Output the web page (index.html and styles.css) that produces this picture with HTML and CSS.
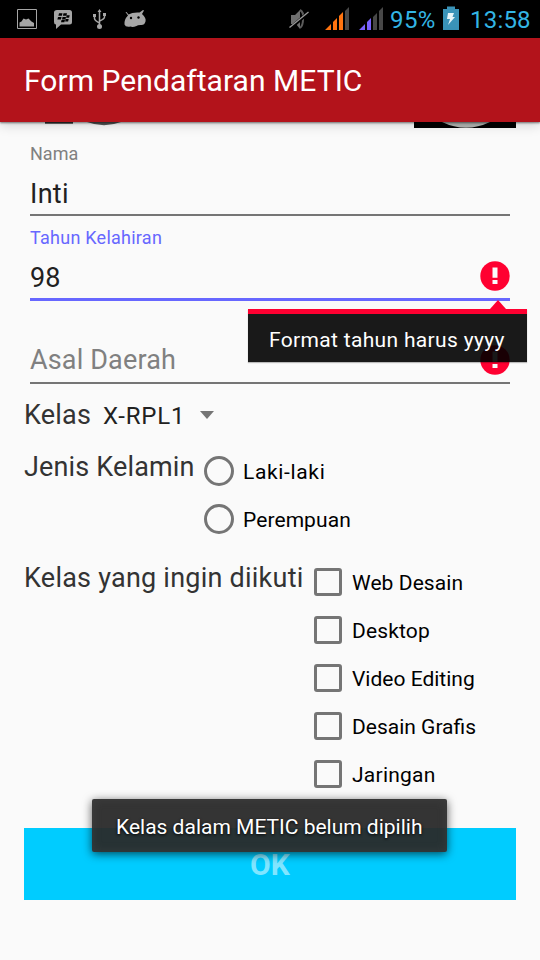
FILE: index.html
```html
<!DOCTYPE html>
<html lang="id">
<head>
<meta charset="utf-8">
<title>Form Pendaftaran METIC</title>
<link rel="stylesheet" href="styles.css">
</head>
<body>
<header class="status">
  <svg width="160" height="38" viewBox="0 0 160 38" fill="#a6a6a6">
    <path d="M17.5 9.500h19v19h-19z" fill="none" stroke="#a6a6a6"/>
    <path d="M19.500 26.500v-4l2-1 2-3 2.500 1 2.500-1 3 3 2.500 1.500v3.500z"/>
    <path d="M57 10h12.500q2.500 0 2.500 2.500v9.500q0 2.500-2.500 2.500h-8.500l-5 4.500v-4.500q-2 0-2-2.500v-9.500q0-2.500 3-2.500z"/>
    <g fill="#000"><path d="M59 13.300h3.500l-.6 2.500h-3.500zM63.500 13.300h3.500l-.6 2.500h-3.500zM58 17h3.500l-.6 2.500H57.400zM62.500 17h3.500l-.6 2.500H62zM66.700 15.200h3l-.6 2.500h-3zM61.500 20h3.500l-.6 2.300H61zM65.700 18.900h3l-.6 2.500h-3z"/></g>
    <g fill="none" stroke="#a6a6a6" stroke-width="1.500"><path d="M99.500 11v15M94.500 16v2.500q0 2 5 4.500M104.500 15v2q0 2-5 4"/></g>
    <path d="M99.500 9l2 3h-4zM93 14h3v3h-3zM103 13h3v3h-3z"/><circle cx="99.500" cy="26.500" r="2.500"/>
    <path d="M125.500 12l1 0 2 2.500q4-2.500 11-2l3.500-2.500 1 .5-2 3.500q4.500 4 3.500 7.500-1 4-5 3.500-3 0-4 1-4 1.500-6 .5-5 1-6-2-.5-5 3.500-9z"/>
    <circle cx="131" cy="18" r="1.200" fill="#000"/><circle cx="138.500" cy="17.500" r="1.200" fill="#000"/>
  </svg>
  <svg class="signals" width="110" height="38" viewBox="280 0 110 38">
    <path d="M291 15h4l5-5v19l-4-5h-5z" fill="#6f6f6f"/>
    <path d="M300 10q4 2 3 9 0 7-3 9" fill="none" stroke="#5c5c5c" stroke-width="2"/>
    <path d="M290 28.500L308.500 12.500" stroke="#000" stroke-width="3.500"/><path d="M289.500 27.500L308.500 12" stroke="#9a9a9a" stroke-width="1.300"/>
    <path d="M325 30l6-6v6zM333 22l4-4v12h-4zM339 16l4-4v18h-4z" fill="#ff7410"/>
    <path d="M345 11l4-4v23h-4zM373 17l4-4v17h-4zM379 11l4-4v23h-4z" fill="#484848"/>
    <path d="M359 30l6-6v6zM367 22l4-4v12h-4z" fill="#7961ff"/>
  </svg>
  <span class="percent">95%</span>
  <svg class="battery" width="16" height="38" viewBox="443 0 16 38">
    <path d="M443 9h4V6.500h8V9h4v21h-16z" fill="#3a93b8"/><path d="M448 13h6l-1.500 4h2.500l-7 8 2-6h-3z" fill="#e6f4f8"/>
  </svg>
  <span class="clock">13:58</span>
</header>
<h1 class="appbar"><span>Form Pendaftaran METIC</span></h1>
<main>
  <div class="banner">
    <svg width="100" height="6" viewBox="40 0 100 6"><path d="M45 0h28v1.700H45z" fill="#333"/><path d="M87 0q17 6.500 34 0z" fill="#555"/></svg>
    <svg width="102" height="6" viewBox="0 0 102 6"><path d="M0 0h102v6H0z"/><path d="M28 0q24 11.500 48 0z" fill="#b5b7b3"/></svg>
  </div>
  <form class="form">
    <div class="field">
      <label class="caption nama">Nama</label>
      <div class="value"><span class="t-inti">Inti</span></div>
    </div>
    <div class="field focused">
      <label class="caption tahun">Tahun Kelahiran</label>
      <div class="value"><span class="t-98">98</span>
        <svg class="error" width="30" height="30" viewBox="0 0 30 30"><circle cx="15" cy="15" r="14.700" fill="#ff0031"/><path d="M12.500 6.500h5v10.300h-5zM12.500 19h5v4h-5z" fill="#fafafa"/></svg>
      </div>
      <div class="popup"><span>Format tahun harus yyyy</span></div>
    </div>
    <div class="field empty">
      <div class="value"><span class="t-asal">Asal Daerah</span>
        <svg class="error" width="30" height="30" viewBox="0 0 30 30"><circle cx="15" cy="15" r="14.700" fill="#ff0031"/><path d="M12.500 6.500h5v10.300h-5zM12.500 19h5v4h-5z" fill="#fafafa"/></svg>
      </div>
    </div>
    <div class="kelas"><span class="big t-kelas">Kelas</span><span class="spinner">X-RPL1</span><i class="caret"></i></div>
    <div class="group gender">
      <span class="big t-jenis">Jenis Kelamin</span>
      <div>
        <div class="option"><i class="radio"></i><span class="o1">Laki-laki</span></div>
        <div class="option"><i class="radio"></i><span class="o2">Perempuan</span></div>
      </div>
    </div>
    <div class="group classes">
      <span class="big t-ikut">Kelas yang ingin diikuti</span>
      <div>
        <div class="option"><i class="check"></i><span class="o3">Web Desain</span></div>
        <div class="option"><i class="check"></i><span class="o4">Desktop</span></div>
        <div class="option"><i class="check"></i><span class="o5">Video Editing</span></div>
        <div class="option"><i class="check"></i><span class="o6">Desain Grafis</span></div>
        <div class="option"><i class="check"></i><span class="o7">Jaringan</span></div>
      </div>
    </div>
    <div class="ok">OK</div>
  </form>
</main>
<div class="toast"><span>Kelas dalam METIC belum dipilih</span></div>
</body>
</html>
```
FILE: styles.css
```css
* { box-sizing: border-box; }
body { margin: 0; width: 540px; height: 960px; overflow: hidden; position: relative; background: #fafafa; color: #000; font-family: Roboto, sans-serif; }
svg { display: block; flex: none; }
span, label { white-space: nowrap; }
.status { height: 38px; background: #000; display: flex; color: #33b5e5; font-size: 24px; line-height: 41px; }
.signals { margin-left: 120px; }
.percent { width: 53px; letter-spacing: .4px; }
.clock { margin-left: 11px; letter-spacing: .2px; }
.appbar { margin: 0; height: 84px; padding-left: 24px; background: #b3131b; color: #fff; font-size: 30px; font-weight: 400; line-height: 86px; letter-spacing: .05px; position: relative; z-index: 1; box-shadow: 0 1px 2px rgba(0,0,0,.5), 0 2px 12px rgba(0,0,0,.2); }
.banner { height: 6px; display: flex; justify-content: space-between; padding: 0 24px 0 40px; }
.form { padding: 16px 24px 0; }
.field { margin: 0 6px; position: relative; }
.caption { display: block; height: 20px; line-height: 20px; font-size: 18px; color: #808080; }
.tahun { letter-spacing: .25px; }
.value { height: 52px; padding-top: 10px; line-height: 40px; font-size: 27px; color: #212121; border-bottom: 2px solid #757575; display: flex; justify-content: space-between; }
.t-inti { letter-spacing: .3px; }
.t-asal { letter-spacing: .15px; }
.error { margin-top: 3px; }
.focused { margin-top: 12px; }
.focused .caption { color: #6767ff; }
.focused .value { height: 53px; border-bottom: 3px solid #6767ff; }
.empty { margin-top: 31px; }
.empty .value { padding-top: 8px; color: #808080; }
.empty .error { margin-top: 5px; }
.popup { position: absolute; z-index: 2; left: 218px; top: 81px; width: 279px; height: 53px; padding-left: 21px; border-top: 5px solid #ff0031; background: rgba(0,0,0,.9); background-clip: padding-box; color: #fff; font-size: 21px; line-height: 53px; letter-spacing: .33px; box-shadow: 0 1px 1px rgba(0,0,0,.25); }
.popup::before { content: ""; position: absolute; left: 242px; top: -14px; border: 8px solid transparent; border-top: 0; border-bottom: 9px solid #ff0031; }
.big { font-size: 27px; color: #333; }
.kelas { height: 63px; line-height: 62px; display: flex; align-items: baseline; }
.kelas .big { width: 79px; letter-spacing: .2px; }
.spinner { width: 97px; font-size: 24px; letter-spacing: .8px; color: #212121; }
.caret { align-self: flex-start; margin-top: 27px; border: 7px solid transparent; border-top: 8px solid #757575; border-bottom: 0; }
.group { display: flex; }
.group .big { padding-top: 2px; line-height: 36px; }
.gender .big { width: 180px; letter-spacing: .15px; }
.classes { margin-top: 15px; }
.classes .big { width: 290px; letter-spacing: .23px; }
.option { height: 48px; display: flex; align-items: center; font-size: 21px; line-height: 24px; }
.option span { padding-top: 2px; }
.o1 { letter-spacing: .65px; }
.o2, .o3 { letter-spacing: .08px; }
.o4 { letter-spacing: .15px; }
.o7 { letter-spacing: .25px; }
.radio { width: 30px; height: 30px; margin-right: 9px; border: 3px solid #757575; border-radius: 50%; }
.check { width: 28px; height: 28px; margin-right: 10px; border: 3px solid #757575; border-radius: 3px; }
.ok { margin-top: 30px; height: 72px; background: #00ccff; color: #80e5ff; text-align: center; font-size: 30px; font-weight: 700; line-height: 73px; }
.toast { position: absolute; left: 92px; top: 799px; width: 355px; height: 53px; padding-left: 24px; border-radius: 2px; background: rgba(41,41,41,.95); color: #fff; font-size: 21px; line-height: 57px; box-shadow: 0 2px 10px rgba(0,0,0,.65), inset 0 0 10px rgba(80,80,80,.4); text-shadow: 0 1px 3px #000; }
```
